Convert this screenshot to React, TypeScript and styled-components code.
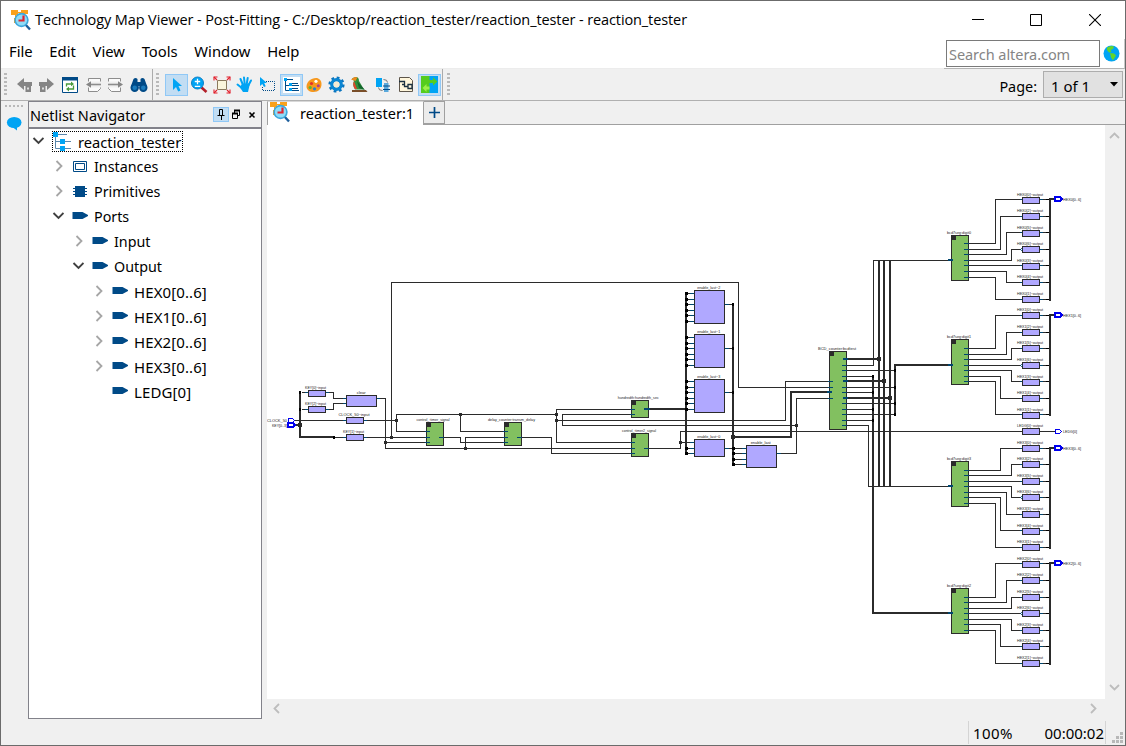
import React from 'react';
import styled, { createGlobalStyle } from 'styled-components';

const GlobalStyle = createGlobalStyle`
  * { box-sizing: border-box; }
  html, body { margin: 0; padding: 0; overflow: hidden; }
  body { font-family: 'Noto Sans', 'Open Sans', sans-serif; font-size: 15px; color: #000; }
  svg { display: block; flex: none; }
`;

const Window = styled.div`
  width: 1126px;
  height: 746px;
  display: flex;
  flex-direction: column;
  background: #f0f0f0;
  border: 1px solid #6b6b6b;
`;

const TitleBar = styled.header`
  height: 38px;
  flex: none;
  display: flex;
  align-items: center;
  background: #fff;
  padding-left: 9px;
`;

const Title = styled.span`
  font-family: 'Open Sans', 'Noto Sans', sans-serif;
  font-size: 14.5px;
  line-height: 20px;
  margin-left: 3px;
  flex: 1;
  white-space: nowrap;
  letter-spacing: -0.1px;
`;

const WindowButtons = styled.div`
  display: flex;
  padding-right: 1px;
`;

const WindowButton = styled.div`
  width: 58.5px;
  display: flex;
  justify-content: center;
`;

const MenuRow = styled.div`
  height: 30px;
  flex: none;
  display: flex;
  background: #fff;
  justify-content: space-between;
  border-bottom: 1px solid #ececec;
`;

const MenuBar = styled.nav`
  display: flex;
  gap: 16.7px;
  padding-left: 8px;
  line-height: 25px;
  font-size: 14.8px;
`;

const SearchArea = styled.div`
  display: flex;
  align-items: center;
  width: 181px;
  height: 30px;
  padding-left: 2px;
  border-bottom: 1px solid #b4b4b4;
  border-right: 1px solid #c8c8c8;
`;

const SearchBox = styled.div`
  width: 154px;
  height: 27px;
  border: 1px solid #7a7a7a;
  color: #858585;
  padding-left: 2px;
  line-height: 27px;
  font-size: 14.5px;
  letter-spacing: -0.05px;
  margin-right: 3px;
  white-space: nowrap;
`;

const ToolRow = styled.div`
  height: 32px;
  flex: none;
  display: flex;
  align-items: stretch;
  border-bottom: 1px solid #b0b0b0;
`;

const ToolGroup = styled.div<{ $width: number; $last?: boolean }>`
  width: ${(p) => p.$width}px;
  display: flex;
  align-items: center;
  border-right: ${(p) => (p.$last ? 'none' : '1px solid #ababab')};
  padding-left: ${(p) => (p.$last ? 4 : 3)}px;
`;

const Grip = styled.div`
  width: 3px;
  height: 24px;
  flex: none;
  background: repeating-linear-gradient(to bottom, #b9b9b9 0 2px, #f0f0f0 2px 4px);
`;

const Tool = styled.div<{ $on?: boolean; $ml?: number }>`
  width: 23px;
  height: 22px;
  margin-left: ${(p) => p.$ml ?? 0}px;
  flex: none;
  display: flex;
  align-items: center;
  justify-content: center;
  background: ${(p) => (p.$on ? '#c2ddf3' : 'transparent')};
  border: 1px solid ${(p) => (p.$on ? '#90c8f6' : 'transparent')};
`;

const PageArea = styled.div`
  margin-left: auto;
  display: flex;
  align-items: center;
  gap: 6px;
  padding-right: 2px;
`;

const PageText = styled.span`
  font-size: 14.4px;
  padding-top: 3px;
`;

const Combo = styled.div`
  width: 80px;
  height: 27px;
  display: flex;
  align-items: center;
  justify-content: space-between;
  padding: 0 4px 0 7px;
  background: #e1e1e1;
  border: 1px solid #adadad;
`;

const ComboText = styled.span`
  padding-top: 2px;
`;

const Workspace = styled.div`
  height: 618px;
  flex: none;
  display: flex;
`;

const SideStrip = styled.div`
  width: 27px;
  flex: none;
  padding: 4px 0 0 4px;
`;

const HGrip = styled.div`
  width: 19px;
  height: 2px;
  background: repeating-linear-gradient(to right, #b9b9b9 0 2px, #f0f0f0 2px 4px);
  margin-bottom: 9px;
`;

const Navigator = styled.section`
  width: 234px;
  flex: none;
  display: flex;
  flex-direction: column;
  background: #fff;
  border: 1px solid #82828a;
`;

const NavHeader = styled.div`
  height: 27px;
  flex: none;
  display: flex;
  align-items: center;
  background: #f0f0f0;
  border-bottom: 2px solid #82828a;
  padding-left: 1px;
`;

const NavTitle = styled.span`
  flex: 1;
  line-height: 20px;
  padding-top: 1px;
  font-size: 14.5px;
`;

const PinButton = styled.div`
  width: 16px;
  height: 15px;
  background: #c2ddf3;
  border: 1px solid #90c8f6;
  display: flex;
  align-items: center;
  justify-content: center;
`;

const Tree = styled.div`
  display: flex;
  flex-direction: column;
`;

const TreeRow = styled.div<{ $level: number }>`
  height: 25px;
  display: flex;
  align-items: center;
  padding-left: ${(p) => 3 + p.$level * 20}px;
`;

const TreeLabel = styled.span<{ $level: number }>`
  padding-left: ${(p) => (p.$level === 0 ? 4 : 6)}px;
  line-height: 20px;
  margin-top: 1px;
  font-size: ${(p) => (p.$level === 3 ? 15 : p.$level === 0 ? 14.7 : 14.3)}px;
  letter-spacing: ${(p) => (p.$level === 3 ? 0.1 : 0)}px;
`;

const Chevron = styled.div`
  width: 20px;
  flex: none;
  padding-bottom: 2px;
`;

const TreeItem = styled.div<{ $focus?: boolean }>`
  height: 21px;
  display: flex;
  align-items: center;
  padding-right: 2px;
  outline: ${(p) => (p.$focus ? '1px dotted #000' : 'none')};
  outline-offset: -1px;
  white-space: nowrap;
`;

const Main = styled.main`
  margin-left: 5px;
  flex: 1;
  display: flex;
  flex-direction: column;
`;

const TabStrip = styled.div`
  height: 24px;
  flex: none;
  display: flex;
  border-bottom: 1px solid #a0a0a0;
`;

const Tab = styled.div`
  width: 157px;
  height: 24px;
  display: flex;
  align-items: center;
  background: #fff;
  border: 1px solid #a0a0a0;
  border-top-color: #d8d8d8;
  border-bottom: 0;
  padding: 0 0 3px 1px;
`;

const TabText = styled.span`
  margin-left: 9px;
  padding-top: 2px;
  font-size: 14.5px;
  white-space: nowrap;
`;

const AddTab = styled.div`
  width: 21px;
  height: 23px;
  display: flex;
  align-items: center;
  justify-content: center;
  border: 1px solid #a0a0a0;
  border-left: 0;
  background: #ececec;
`;

const ViewRow = styled.div`
  display: flex;
  height: 574px;
`;

const Canvas = styled.div`
  width: 838px;
  background: #fff;
`;

const VScroll = styled.div`
  width: 18px;
  display: flex;
  flex-direction: column;
  justify-content: space-between;
  align-items: center;
  padding: 5px 0 6px;
`;

const HScroll = styled.div`
  width: 838px;
  height: 19px;
  display: flex;
  justify-content: space-between;
  align-items: center;
  padding: 0 6px 0 4px;
`;

const StatusBar = styled.footer`
  flex: 1;
  display: flex;
  justify-content: flex-end;
  padding-top: 2px;
`;

const StatusCell = styled.div`
  width: 138px;
  height: 23px;
  display: flex;
  justify-content: space-between;
  align-items: center;
  padding: 0 1px 0 4px;
  border-left: 1px solid #d4d4d4;
  border-right: 1px solid #d4d4d4;
`;

const StatusText = styled.span<{ $spacing?: number }>`
  letter-spacing: ${(p) => p.$spacing ?? 0}px;
`;

const SizeGrip = styled.div`
  width: 19px;
  padding: 11px 0 0 6px;
`;

const NAVY = '#004a87';
const SKY = '#00a4f4';

const AppIcon = () => (
  <svg width="22" height="22" viewBox="0 0 22 22">
    <path d="M1 1h7v5H1zM11 1h7v4h-7zM4 9h4v5H4z" fill="#f9a11b" />
    <path d="M6 3.500h6M5.500 5v5" stroke="#f9a11b" strokeWidth="1" />
    <path d="M15 15l5 5.500" stroke="#1d5f9c" strokeWidth="2.400" />
    <circle cx="11.500" cy="11" r="6.400" fill="#8fdcf8" stroke="#3da7dc" strokeWidth="1.600" />
    <path d="M13.500 6.500v5H8.500" stroke="#e02530" strokeWidth="2.200" fill="none" />
  </svg>
);

const BackArrow = ({ flip }: { flip?: boolean }) => (
  <svg width="17" height="16" viewBox="0 0 17 16">
    <g transform={flip ? 'translate(17 0) scale(-1 1)' : undefined}>
      <path d="M1 7L8 1v4h8v4H8v4z" fill="#858585" />
      <path d="M9.500 8h5.500v7H9.500z" fill="#858585" />
      <path d="M11 10.500h2v2h-2z" fill="#ddd" />
    </g>
  </svg>
);

const RefreshIcon = () => (
  <svg width="16" height="16" viewBox="0 0 16 16">
    <path d="M.5 .5h15v15H.5z" fill="#fff" stroke={NAVY} />
    <path d="M0 0h16v3.500H0z" fill={NAVY} />
    <path d="M4.500 9.500V7H10M11.500 8.500V12H6" fill="none" stroke="#4a9b3c" strokeWidth="1.300" />
    <path d="M9 4.500L12 7 9 9.300zM7 9.700L4 12l3 2.400z" fill="#4a9b3c" />
  </svg>
);

const PageStep = ({ flip }: { flip?: boolean }) => (
  <svg width="16" height="16" viewBox="0 0 16 16">
    <g transform={flip ? 'translate(16 0) scale(-1 1)' : undefined} fill="none" stroke="#8d8d8d">
      <path d="M2.500 4.500v-3h12v3M2.500 10.500v4h9l3-3v-1" fill="#fafafa" />
      <path d="M3 7.500h12" strokeWidth="1.600" />
      <path d="M0 7.500L5 4.200v6.600z" fill="#858585" stroke="none" />
    </g>
  </svg>
);

const Binoculars = () => (
  <svg width="18" height="16" viewBox="0 0 18 16" fill={NAVY}>
    <path d="M3.500 2q2-2 4 0v3h3V2q2-2 4 0L17 9H1z" />
    <circle cx="4.700" cy="10.700" r="4.200" />
    <circle cx="13.300" cy="10.700" r="4.200" />
    <circle cx="4.700" cy="10.700" r="2.300" fill="#1a7bbd" />
    <circle cx="13.300" cy="10.700" r="2.300" fill="#1a7bbd" />
  </svg>
);

const Pointer = () => (
  <svg width="12" height="16" viewBox="0 0 12 16">
    <path d="M2 1v12l3-3 2.200 4.500 2.300-1L7.500 9H11z" fill={SKY} />
  </svg>
);

const ZoomIcon = () => (
  <svg width="18" height="18" viewBox="0 0 18 18">
    <path d="M11.500 11.500l5 4.500" stroke="#b3202a" strokeWidth="2.600" />
    <circle cx="7.500" cy="7" r="6" fill={SKY} stroke="#0b7fc6" />
    <path d="M4.800 5.500h5.400M7.500 2.800v5.400M4.800 10.300h5.400" stroke="#fff" strokeWidth="1.300" />
  </svg>
);

const FitIcon = () => (
  <svg width="18" height="18" viewBox="0 0 18 18">
    <path d="M4.500 4.500h9v9h-9z" fill="#fbf6dc" stroke="#8b7a5e" />
    <g stroke="#e2202c" strokeWidth="1.100" fill="none">
      <path d="M1 1l3 3M17 1l-3 3M1 17l3-3M17 17l-3-3" />
      <path d="M1 4.500V1h3.500M13.500 1H17v3.500M1 13.500V17h3.500M17 13.500V17h-3.500" />
    </g>
  </svg>
);

const HandIcon = () => (
  <svg width="17" height="17" viewBox="0 0 17 17">
    <g stroke={SKY} strokeWidth="2" strokeLinecap="round">
      <path d="M7 9L4.500 3M8.700 8L8 1.500M10.700 8l1-6M12.300 9.500L15 4.500M6.500 12.500L1.500 8.500" />
    </g>
    <path d="M5.500 8.500l7.500-1 .5 2-1.500 6.500H7L4 11.500z" fill={SKY} />
  </svg>
);

const SelectArea = () => (
  <svg width="17" height="16" viewBox="0 0 17 16">
    <path d="M7 4.500h8.500v9h-12V9" fill="none" stroke={NAVY} strokeDasharray="1 1" />
    <path d="M1 0v9l2.300-2 1.700 3 1.700-.8L5.200 6H8z" fill={SKY} />
  </svg>
);

const TreeToolIcon = () => (
  <svg width="17" height="16" viewBox="0 0 17 16">
    <path d="M0 0h17v16H0z" fill="#fff" />
    <path d="M2.500 3v10.500H6M3 8.500h3M4 2.500h6M9 8.500h7M9 13.500h7M9 6.500h6M9 11.500h6" stroke={NAVY} fill="none" />
    <path d="M1 1h3v3H1zM6 6h3v3H6zM6 11h3v3H6z" fill={SKY} />
  </svg>
);

const Palette = () => (
  <svg width="16" height="16" viewBox="0 0 16 16">
    <path d="M10 1C5 1 .5 5 .5 9.500c0 3.500 3 5.500 7 5.500 5 0 8-3.500 8-8C15.500 3.500 13 1 10 1z" fill="#f7981d" />
    <circle cx="10" cy="4.300" r="1.600" fill="#fff" />
    <circle cx="5.500" cy="6.500" r="1.600" fill="#e4322b" />
    <circle cx="4.200" cy="10.500" r="1.600" fill="#5cb531" />
    <circle cx="8.500" cy="11.800" r="1.600" fill="#2b7fd0" />
    <circle cx="12.300" cy="8.800" r="1.500" fill="#b13a8f" />
  </svg>
);

const Gear = () => (
  <svg width="17" height="17" viewBox="0 0 17 17">
    <circle cx="8.500" cy="8.500" r="6.800" fill="none" stroke="#0b74bd" strokeWidth="2.600" strokeDasharray="2.700 2.640" />
    <circle cx="8.500" cy="8.500" r="4.700" fill="none" stroke="#0b86d3" strokeWidth="3.400" />
    <circle cx="8.500" cy="8.500" r="3" fill="#f6ead2" />
  </svg>
);

const Bird = () => (
  <svg width="17" height="17" viewBox="0 0 17 17">
    <path d="M1 2.500L4 1q4-.5 4 4l5 8.500H4Q1 9 3 5z" fill="#2f8f3d" />
    <path d="M0 3.500L3.500 1l3 .5L4.500 5z" fill="#ef8a1e" />
    <path d="M3 5q-2 4 1 8h2z" fill="#e2452c" />
    <path d="M6 5l8 9-6-2z" fill="#14652d" />
    <path d="M1 14h14l1.500 2H1z" fill="#7a4f2a" />
  </svg>
);

const SwapIcon = () => (
  <svg width="16" height="16" viewBox="0 0 16 16">
    <path d="M1 1h6v9H1z" fill={SKY} />
    <path d="M9 6h4.500v9H9z" fill="#5aa9dc" />
    <path d="M8 9h7M8 12.500h7" stroke={NAVY} />
    <path d="M8.500 2.500q4 0 4 3M7.500 13.500q-4 0-4-3" stroke="#777" fill="none" />
  </svg>
);

const CircuitIcon = () => (
  <svg width="16" height="17" viewBox="0 0 16 17">
    <path d="M1.500 1.500h10l3 3v11h-13z" fill="#fff6dc" stroke="#5e564a" />
    <path d="M1 5.500h5.500v5H10M10 8.500h4v4h-4zM4 8.500h2.500" fill="none" stroke="#1a3040" strokeWidth="1.300" />
  </svg>
);

const CrossProbe = () => (
  <svg width="17" height="17" viewBox="0 0 17 17">
    <path d="M0 0h17v17H0z" fill={SKY} />
    <path d="M0 0h8.500v4H12V1.500L16.500 5.500 12 9.500V7H8.500v10H0z" fill="#55cc1e" />
    <path d="M8.500 10.500H5.500V8L1.500 12l4 4v-2.500h3z" fill="#9bf04a" />
  </svg>
);

const Globe = () => (
  <svg width="17" height="17" viewBox="0 0 17 17">
    <circle cx="8.500" cy="8.500" r="8" fill={SKY} />
    <path d="M4 2.500q4-2.500 7-1L10 4 7.500 5l1 2L6 7.500 4 5zM7 8l4 .5 2 2-3 5-2-3z" fill="#63d52c" />
  </svg>
);

const Bubble = () => (
  <svg width="18" height="16" viewBox="0 0 18 16">
    <ellipse cx="9.200" cy="6.500" rx="7.300" ry="5.500" fill={SKY} />
    <path d="M6 10l6 4.500V9z" fill={SKY} />
  </svg>
);

const ChevronGlyph = ({ open }: { open?: boolean }) =>
  open ? (
    <svg width="12" height="10" viewBox="0 0 12 10">
      <path d="M1.500 2l5 5 5-5" fill="none" stroke="#404040" strokeWidth="1.900" />
    </svg>
  ) : (
    <svg width="14" height="12" viewBox="0 0 14 12">
      <path d="M4.500 1l5 5-5 5" fill="none" stroke="#a6a6a6" strokeWidth="1.800" />
    </svg>
  );

const ScrollArrow = ({ turn }: { turn: number }) => (
  <svg width="11" height="11" viewBox="0 0 11 11">
    <path d="M1 8l4.500-4.500L10 8" fill="none" stroke="#bdbdbd" strokeWidth="1.800" transform={`rotate(${turn} 5.500 5.500)`} />
  </svg>
);

type IconKind = 'root' | 'instance' | 'primitive' | 'port';

const TreeIcon = ({ kind }: { kind: IconKind }) => {
  if (kind === 'root')
    return (
      <svg width="22" height="20" viewBox="0 0 22 20">
        <path d="M3.500 2v14.500H8M4 9.500h4M6 2.500h9M13 9.500h6M13 16.500h6" stroke="#5b87ab" fill="none" />
        <path d="M1 0h5v5H1zM8 7h5v5H8zM8 14h5v5H8z" fill={SKY} />
      </svg>
    );
  if (kind === 'instance')
    return (
      <svg width="16" height="14" viewBox="0 0 16 14">
        <path d="M1.500 1.500h13v10h-13zM3.500 3.500h9v6h-9z" fill="#fff" stroke={NAVY} strokeWidth="1" />
      </svg>
    );
  if (kind === 'primitive')
    return (
      <svg width="16" height="14" viewBox="0 0 16 14">
        <path d="M3 1h10v11H3z" fill={NAVY} />
        <path d="M1 3.500h14M1 6.500h14M1 9.500h14" stroke={NAVY} />
      </svg>
    );
  return (
    <svg width="16" height="14" viewBox="0 0 16 14">
      <path d="M.5 2h10l5.500 3v1l-5.500 3H.5z" fill={NAVY} />
    </svg>
  );
};

const TREE: { level: number; open?: boolean; leaf?: boolean; kind: IconKind; label: string }[] = [
  { level: 0, open: true, kind: 'root', label: 'reaction_tester' },
  { level: 1, kind: 'instance', label: 'Instances' },
  { level: 1, kind: 'primitive', label: 'Primitives' },
  { level: 1, open: true, kind: 'port', label: 'Ports' },
  { level: 2, kind: 'port', label: 'Input' },
  { level: 2, open: true, kind: 'port', label: 'Output' },
  { level: 3, kind: 'port', label: 'HEX0[0..6]' },
  { level: 3, kind: 'port', label: 'HEX1[0..6]' },
  { level: 3, kind: 'port', label: 'HEX2[0..6]' },
  { level: 3, kind: 'port', label: 'HEX3[0..6]' },
  { level: 3, leaf: true, kind: 'port', label: 'LEDG[0]' },
];

/* ---------- schematic ---------- */

const WIRE = '#2b2b2b';
const PIN = '#00466f';

type Pt = [number, number];

const Note = ({ x, y, w, children }: { x: number; y: number; w: number; children: string }) => (
  <text x={x - w / 2} y={y + 1.4} fontSize="4.200" textLength={w} lengthAdjust="spacingAndGlyphs" fill="#222">
    {children}
  </text>
);

const Wire = ({ d }: { d: string }) => <path d={d} transform="translate(.5 .5)" fill="none" stroke={WIRE} />;
const Bus = ({ d }: { d: string }) => <path d={d} fill="none" stroke={WIRE} strokeWidth="2" />;
const Dot = ({ at }: { at: Pt }) => <rect x={at[0] - 1} y={at[1] - 1} width="3" height="3" fill={WIRE} />;
const Joint = ({ at }: { at: Pt }) => <rect x={at[0] - 2} y={at[1] - 2} width="4" height="4" fill={WIRE} />;

const Pin = ({ x, y, w = 4, thick }: { x: number; y: number; w?: number; thick?: boolean }) => (
  <rect x={x} y={thick ? y - 1 : y} width={w} height={thick ? 2 : 1} fill={PIN} />
);

const Cell = ({ x, y, w, h }: { x: number; y: number; w: number; h: number }) => (
  <rect x={x + 0.5} y={y + 0.5} width={w} height={h} fill="#b0a8ff" stroke={WIRE} />
);

const Block = ({ x, y, h, ins, outs }: { x: number; y: number; h: number; ins: number[]; outs: number[] }) => (
  <g>
    <rect x={x + 0.5} y={y + 0.5} width="17" height={h} fill="#82c060" stroke={WIRE} />
    <rect x={x} y={y} width="5" height="5" fill={WIRE} />
    {ins.map((v) => (
      <Pin key={v} x={x - 1} y={v} w={5} />
    ))}
    {outs.map((v) => (
      <Pin key={v} x={x + 13} y={v} w={5} />
    ))}
  </g>
);

const Port = ({ x, y, bold }: { x: number; y: number; bold?: boolean }) =>
  bold ? (
    <path d={`M${x} ${y - 2}h5l2 2-2 2h-5z`} fill="#fff" stroke="#0000f0" strokeWidth="2" />
  ) : (
    <path d={`M${x + 0.5} ${y - 1.5}h4l2 2-2 2h-4z`} fill="#fff" stroke="#0000f0" />
  );

type Digit = {
  name: string;
  title: string;
  top: number;
  pins: number[];
  rows: number[];
  cells: number[];
  bends: (number | null)[];
  port: string;
};

const BITS = [0, 2, 5, 6, 3, 4, 1];

const DIGITS: Digit[] = [
  {
    name: 'HEX0', title: 'bcd7seg:digit0', top: 235, port: 'HEX0[0..6]',
    pins: [243, 249, 254, 260, 265, 271, 277],
    rows: [199, 216, 232, 249, 265, 282, 299],
    cells: [197, 213, 230, 246, 263, 279, 296],
    bends: [995, 1000, 1006, 1011, null, 1006, 995],
  },
  {
    name: 'HEX1', title: 'bcd7seg:digit1', top: 339, port: 'HEX1[0..6]',
    pins: [348, 354, 359, 365, 370, 376, 381],
    rows: [315, 332, 348, 365, 381, 398, 414],
    cells: [312, 329, 345, 362, 379, 395, 412],
    bends: [995, 1006, 1011, null, 1011, 1000, 995],
  },
  {
    name: 'HEX3', title: 'bcd7seg:digit3', top: 461, port: 'HEX3[0..6]',
    pins: [470, 475, 481, 486, 492, 497, 503],
    rows: [448, 464, 481, 497, 514, 530, 547],
    cells: [445, 461, 478, 494, 511, 528, 544],
    bends: [1000, 1011, null, 1011, 1006, 1000, 995],
  },
  {
    name: 'HEX2', title: 'bcd7seg:digit2', top: 588, port: 'HEX2[0..6]',
    pins: [597, 602, 608, 613, 619, 624, 630],
    rows: [563, 580, 597, 613, 630, 646, 663],
    cells: [561, 577, 594, 610, 627, 643, 660],
    bends: [995, 1006, 1011, null, 1011, 1000, 995],
  },
];

const DigitGroup = ({ d }: { d: Digit }) => (
  <g>
    {d.rows.map((row, i) => {
      const bend = d.bends[i];
      return (
        <g key={row}>
          <Wire d={bend === null ? `M968 ${d.pins[i]}H1022` : `M968 ${d.pins[i]}H${bend}V${row}H1022`} />
          <Wire d={`M1039 ${row}H1049`} />
          <Pin x={1020} y={row} w={2} />
          <Pin x={1040} y={row} w={3} />
          <Cell x={1022} y={d.cells[i]} w={17} h={6} />
          {BITS[i] === 6 && <circle cx={1021.5} cy={row + 0.5} r="1" fill="#fff" stroke={PIN} strokeWidth=".8" />}
          <rect x={1046} y={row} width="3" height="1" fill="#000" />
          <rect x={1049} y={row - 1} width="2" height="3" fill="#000" />
          <Note x={1030} y={d.cells[i] - 2.7} w={26}>{`${d.name}[${BITS[i]}]~output`}</Note>
        </g>
      );
    })}
    <Bus d={`M1050 ${d.rows[6] + 2}V${d.rows[0]}H1055`} />
    <Port x={1055} y={d.rows[0]} bold />
    <Note x={1072} y={d.rows[0] + 0.2} w={18}>{d.port}</Note>
    <Block x={951} y={d.top} h={45} ins={[]} outs={d.pins} />
    <Note x={959} y={d.top - 2.5} w={24}>{d.title}</Note>
  </g>
);

const ENABLES = [
  { y: 290, h: 33, ins: [293, 299, 304, 310, 315, 321], out: 304, name: 'enable_last~2' },
  { y: 334, h: 33, ins: [337, 343, 348, 354, 359, 365], out: 348, name: 'enable_last~1' },
  { y: 379, h: 33, ins: [381, 387, 392, 398, 403, 409], out: 392, name: 'enable_last~3' },
  { y: 439, h: 17, ins: [442, 448, 453], out: 448, name: 'enable_last~0' },
];

const WIRES = [
  'M325 392H333V398H346', 'M325 409H333V403H346', 'M301 392H308', 'M301 409H308',
  'M294 420H346', 'M363 420H396', 'M333 437H346', 'M363 437H426',
  'M376 398H385V448H631', 'M385 442H426', 'M426 431H396V414H556',
  'M391 437V282H738V387H829', 'M443 437H460V442H504', 'M460 414V431H504',
  'M465 448V437H504', 'M521 437H551V453H631',
  'M631 409H556V442H631', 'M631 414H562V425H796', 'M556 420H785V381H829',
  'M648 448H680V431H1022', 'M680 442H694', 'M776 453H796V398H829',
  'M846 365H873V260H951', 'M846 370H895', 'M846 376H873', 'M846 387H895',
  'M846 392H873', 'M846 403H895', 'M846 409H873', 'M846 414H895', 'M846 420H873',
  'M846 425H868V486H951', 'M1039 431H1055',
];

const BUSES = [
  'M300 391V437H333', 'M289 425H300', 'M648 409H686', 'M686 292V454', 'M733 303V466',
  'M733 437H791V392H829', 'M846 359H879', 'M846 381H884', 'M846 398H890',
  'M879 261V486', 'M884 261V486', 'M890 261V486',
  'M873 375V613H951', 'M895 415V365H951',
];

const CELL_PINS: Pt[] = [
  [305, 392], [305, 409], [326, 392], [326, 409], [343, 398], [343, 403],
  [377, 398], [343, 420], [364, 420], [343, 437], [364, 437],
];

const DOTS: Pt[] = [
  [396, 420], [391, 437], [385, 442], [460, 414], [465, 448],
  [556, 414], [556, 420], [680, 442], [796, 425],
];

const JOINTS: Pt[] = [[300, 425], [733, 437], [879, 359], [884, 381], [890, 398]];

const TAPS: Pt[] = [
  [299, 392], [299, 409], [333, 437], [872, 376], [872, 392], [872, 409],
  [872, 420], [894, 370], [894, 387], [894, 403], [894, 414],
];

const Schematic = () => (
  <svg
    width="838"
    height="574"
    viewBox="267 125 838 574"
    shapeRendering="crispEdges"
    fontFamily="'Liberation Sans', sans-serif"
  >
    {WIRES.map((d) => <Wire key={d} d={d} />)}
    {BUSES.map((d) => <Bus key={d} d={d} />)}

    <Port x={288} y={420} />
    <Port x={288} y={425} bold />
    <Note x={277} y={420.7} w={20}>CLOCK_50</Note>
    <Note x={279.5} y={425.7} w={15}>KEY[0..3]</Note>

    <Cell x={308} y={390} w={17} h={6} />
    <Note x={315.5} y={387.5} w={21}>KEY[0]~input</Note>
    <Cell x={308} y={406} w={17} h={6} />
    <Note x={315.5} y={403.7} w={21}>KEY[2]~input</Note>
    <Cell x={346} y={395} w={30} h={11} />
    <Note x={361.2} y={392.7} w={9}>clear</Note>
    <Cell x={346} y={417} w={17} h={6} />
    <Note x={354} y={414.5} w={31}>CLOCK_50~input</Note>
    <Cell x={346} y={434} w={17} h={6} />
    <Note x={353.5} y={431.5} w={21}>KEY[1]~input</Note>
    {CELL_PINS.map(([x, y]) => <Pin key={`${x}-${y}`} x={x} y={y} w={3} />)}

    <Block x={426} y={422} h={23} ins={[431, 437, 442]} outs={[437]} />
    <Note x={433} y={419.7} w={33}>control_:timer_signal</Note>
    <Block x={504} y={422} h={23} ins={[431, 437, 442]} outs={[437]} />
    <Note x={511.5} y={419.7} w={47}>delay_counter:transm_delay</Note>
    <Block x={631} y={400} h={17} ins={[409, 414]} outs={[]} />
    <Pin x={644} y={409} w={6} thick />
    <Note x={638.2} y={397.5} w={41}>hundredth:hundredth_sec</Note>
    <Block x={631} y={433} h={23} ins={[442, 448, 453]} outs={[448]} />
    <Note x={639} y={430.7} w={34}>control_:timer2_signal</Note>

    {ENABLES.map((e) => (
      <g key={e.name}>
        {e.ins.map((v) => (
          <g key={v}>
            <Wire d={`M686 ${v}H694`} />
            <Pin x={690} y={v} />
            {v !== 442 && <rect x={685} y={v - 1} width="3" height="3" fill="#000" />}
          </g>
        ))}
        <Wire d={`M724 ${e.out}H733`} />
        <Pin x={725} y={e.out} />
        <rect x={732} y={e.out - 1} width="2" height="3" fill="#000" />
        <Cell x={694} y={e.y} w={30} h={e.h} />
        <Note x={708.7} y={e.y - 2.5} w={23}>{e.name}</Note>
      </g>
    ))}
    {[448, 453, 459, 464].map((v) => (
      <g key={v}>
        <Wire d={`M733 ${v}H746`} />
        <Pin x={742} y={v} />
        <rect x={732} y={v - 1} width="3" height="3" fill="#000" />
      </g>
    ))}
    <Cell x={746} y={445} w={30} h={22} />
    <Pin x={777} y={453} />
    <Note x={760.7} y={442.7} w={20}>enable_last</Note>

    <Block x={829} y={351} h={78} ins={[381, 387, 398]} outs={[365, 370, 376, 387, 392, 403, 409, 414, 420, 425]} />
    <Pin x={827} y={392} w={5} thick />
    {[359, 381, 398].map((v) => <Pin key={v} x={843} y={v} w={5} thick />)}
    <Note x={837} y={348.5} w={38}>BCD_counter:bcdtest</Note>

    {DIGITS.map((d) => <DigitGroup key={d.name} d={d} />)}
    {[260, 365, 486, 613].map((v) => <Pin key={v} x={948} y={v} w={5} thick />)}

    <Cell x={1022} y={428} w={17} h={6} />
    <Note x={1030} y={425.5} w={26}>LEDG[0]~output</Note>
    <Port x={1055} y={431} />
    <Note x={1070} y={431.5} w={14}>LEDG[0]</Note>

    {DOTS.map((p) => <Dot key={p.join()} at={p} />)}
    {JOINTS.map((p) => <Joint key={p.join()} at={p} />)}
    {TAPS.map(([x, y]) => <rect key={`${x}-${y}`} x={x} y={y - 1} width="2" height="3" fill="#000" />)}
  </svg>
);

export default function App() {
  return (
    <>
      <GlobalStyle />
      <Window>
        <TitleBar>
          <AppIcon />
          <Title>Technology Map Viewer - Post-Fitting - C:/Desktop/reaction_tester/reaction_tester - reaction_tester</Title>
          <WindowButtons>
            <WindowButton>
              <svg width="12" height="12" viewBox="0 0 12 12"><path d="M0 5.500h12" stroke="#000" /></svg>
            </WindowButton>
            <WindowButton>
              <svg width="12" height="12" viewBox="0 0 12 12"><path d="M.5 .5h11v11H.5z" fill="none" stroke="#000" /></svg>
            </WindowButton>
            <WindowButton>
              <svg width="12" height="12" viewBox="0 0 12 12"><path d="M0 0l12 12M12 0L0 12" stroke="#000" strokeWidth="1.100" /></svg>
            </WindowButton>
          </WindowButtons>
        </TitleBar>
        <MenuRow>
          <MenuBar>
            <span>File</span><span>Edit</span><span>View</span><span>Tools</span><span>Window</span><span>Help</span>
          </MenuBar>
          <SearchArea>
            <SearchBox>Search altera.com</SearchBox>
            <Globe />
          </SearchArea>
        </MenuRow>
        <ToolRow>
          <ToolGroup $width={152}>
            <Grip />
            <Tool $ml={6}><BackArrow /></Tool>
            <Tool $ml={-1}><BackArrow flip /></Tool>
            <Tool><RefreshIcon /></Tool>
            <Tool $ml={1}><PageStep /></Tool>
            <Tool $ml={-2}><PageStep flip /></Tool>
            <Tool $ml={1}><Binoculars /></Tool>
          </ToolGroup>
          <ToolGroup $width={290}>
            <Grip />
            <Tool $ml={6} $on><Pointer /></Tool>
            <Tool $ml={-1}><ZoomIcon /></Tool>
            <Tool><FitIcon /></Tool>
            <Tool><HandIcon /></Tool>
            <Tool><SelectArea /></Tool>
            <Tool $ml={1} $on><TreeToolIcon /></Tool>
            <Tool $ml={-1}><Palette /></Tool>
            <Tool><Gear /></Tool>
            <Tool><Bird /></Tool>
            <Tool><SwapIcon /></Tool>
            <Tool><CircuitIcon /></Tool>
            <Tool $ml={1} $on><CrossProbe /></Tool>
          </ToolGroup>
          <ToolGroup $width={8} $last><Grip /></ToolGroup>
          <PageArea>
            <PageText>Page:</PageText>
            <Combo>
              <ComboText>1 of 1</ComboText>
              <svg width="8" height="5" viewBox="0 0 8 5"><path d="M0 0h8L4 4.500z" /></svg>
            </Combo>
          </PageArea>
        </ToolRow>
        <Workspace>
          <SideStrip>
            <HGrip />
            <Bubble />
          </SideStrip>
          <Navigator>
            <NavHeader>
              <NavTitle>Netlist Navigator</NavTitle>
              <PinButton>
                <svg width="8" height="11" viewBox="0 0 8 11"><path d="M2.500 .5h3v6h-3zM.5 6.500h7M4.500 6.500V11" fill="none" stroke="#000" /></svg>
              </PinButton>
              <svg width="32" height="12" viewBox="0 0 32 12">
                <path d="M5.500 4V1.500h5v5H9" fill="none" stroke="#000" />
                <path d="M5 1.500h6M3 4.500h6" stroke="#000" strokeWidth="1.800" />
                <path d="M3.500 4.500h5v5h-5z" fill="none" stroke="#000" />
                <path d="M20.500 3.500l5 5M25.500 3.500l-5 5" stroke="#000" strokeWidth="1.600" />
              </svg>
            </NavHeader>
            <Tree>
              {TREE.map((n) => (
                <TreeRow key={n.label} $level={n.level}>
                  <Chevron>{!n.leaf && <ChevronGlyph open={n.open} />}</Chevron>
                  <TreeItem $focus={n.level === 0}>
                    <TreeIcon kind={n.kind} />
                    <TreeLabel $level={n.level}>{n.label}</TreeLabel>
                  </TreeItem>
                </TreeRow>
              ))}
            </Tree>
          </Navigator>
          <Main>
            <TabStrip>
              <Tab>
                <AppIcon />
                <TabText>reaction_tester:1</TabText>
              </Tab>
              <AddTab>
                <svg width="11" height="11" viewBox="0 0 11 11"><path d="M5.500 0v11M0 5.500h11" stroke={NAVY} strokeWidth="1.700" /></svg>
              </AddTab>
            </TabStrip>
            <ViewRow>
              <Canvas><Schematic /></Canvas>
              <VScroll><ScrollArrow turn={0} /><ScrollArrow turn={180} /></VScroll>
            </ViewRow>
            <HScroll><ScrollArrow turn={-90} /><ScrollArrow turn={90} /></HScroll>
          </Main>
        </Workspace>
        <StatusBar>
          <StatusCell>
            <StatusText $spacing={0.4}>100%</StatusText>
            <StatusText>00:00:02</StatusText>
          </StatusCell>
          <SizeGrip>
            <svg width="11" height="11" viewBox="0 0 11 11" fill="#b8b8b8">
              <path d="M8 0h3v3H8zM4 4h3v3H4zM8 4h3v3H8zM0 8h3v3H0zM4 8h3v3H4zM8 8h3v3H8z" />
            </svg>
          </SizeGrip>
        </StatusBar>
      </Window>
    </>
  );
}
